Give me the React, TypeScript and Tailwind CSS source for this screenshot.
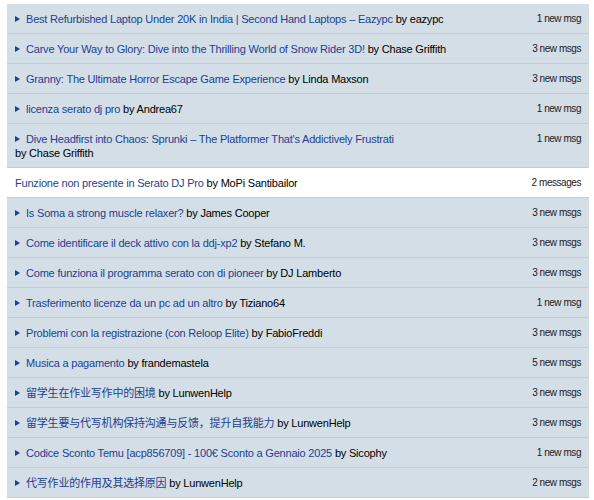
import React from "react"

type Topic = {
  title: string
  author: string
  count: string
  open?: boolean
  wrap?: boolean
}

const topics: Topic[] = [
  { title: "Best Refurbished Laptop Under 20K in India | Second Hand Laptops – Eazypc", author: "eazypc", count: "1 new msg" },
  { title: "Carve Your Way to Glory: Dive into the Thrilling World of Snow Rider 3D!", author: "Chase Griffith", count: "3 new msgs" },
  { title: "Granny: The Ultimate Horror Escape Game Experience", author: "Linda Maxson", count: "3 new msgs" },
  { title: "licenza serato dj pro", author: "Andrea67", count: "1 new msg" },
  { title: "Dive Headfirst into Chaos: Sprunki – The Platformer That's Addictively Frustrati", author: "Chase Griffith", count: "1 new msg", wrap: true },
  { title: "Funzione non presente in Serato DJ Pro", author: "MoPi Santibailor", count: "2 messages", open: true },
  { title: "Is Soma a strong muscle relaxer?", author: "James Cooper", count: "3 new msgs" },
  { title: "Come identificare il deck attivo con la ddj-xp2", author: "Stefano M.", count: "3 new msgs" },
  { title: "Come funziona il programma serato con di pioneer", author: "DJ Lamberto", count: "3 new msgs" },
  { title: "Trasferimento licenze da un pc ad un altro", author: "Tiziano64", count: "1 new msg" },
  { title: "Problemi con la registrazione (con Reloop Elite)", author: "FabioFreddi", count: "3 new msgs" },
  { title: "Musica a pagamento", author: "frandemastela", count: "5 new msgs" },
  { title: "留学生在作业写作中的困境", author: "LunwenHelp", count: "3 new msgs" },
  { title: "留学生要与代写机构保持沟通与反馈，提升自我能力", author: "LunwenHelp", count: "3 new msgs" },
  { title: "Codice Sconto Temu [acp856709] - 100€ Sconto a Gennaio 2025", author: "Sicophy", count: "1 new msg" },
  { title: "代写作业的作用及其选择原因", author: "LunwenHelp", count: "2 new msgs" },
]

const TopicRow = ({ topic }: { topic: Topic }) => (
  <div
    className={`flex items-start justify-between border-b border-[#c3ccd3] pl-2 pr-2 pt-[8px] pb-[7px] ${
      topic.open ? "bg-white" : "bg-[#d3dee6]"
    }`}
  >
    <div className="text-[11px] leading-[14px] tracking-[-0.2px] text-black">
      {!topic.open && (
        <span className="inline-block w-0 h-0 border-l-[5px] border-l-[#1d3f94] border-y-[3px] border-y-transparent mr-[6px] align-[1px]" />
      )}
      <span className="text-[#1d3f94] tracking-[-0.2px]">{topic.title}</span>
      {topic.wrap ? <br /> : " "}
      by {topic.author}
    </div>
    <div className="text-[10px] leading-[14px] tracking-[-0.45px] text-[#1a1a1a] whitespace-nowrap pl-3">
      {topic.count}
    </div>
  </div>
)

export default function App() {
  return (
    <div
      className="bg-white w-[594px] h-[500px] overflow-hidden pt-[4px] pl-[7px] pr-[5px]"
      style={{ fontFamily: '"Liberation Sans", Arial, "Noto Sans CJK SC", sans-serif' }}
    >
      <div className="flex flex-col">
        {topics.map((t, i) => (
          <TopicRow key={i} topic={t} />
        ))}
      </div>
    </div>
  )
}
